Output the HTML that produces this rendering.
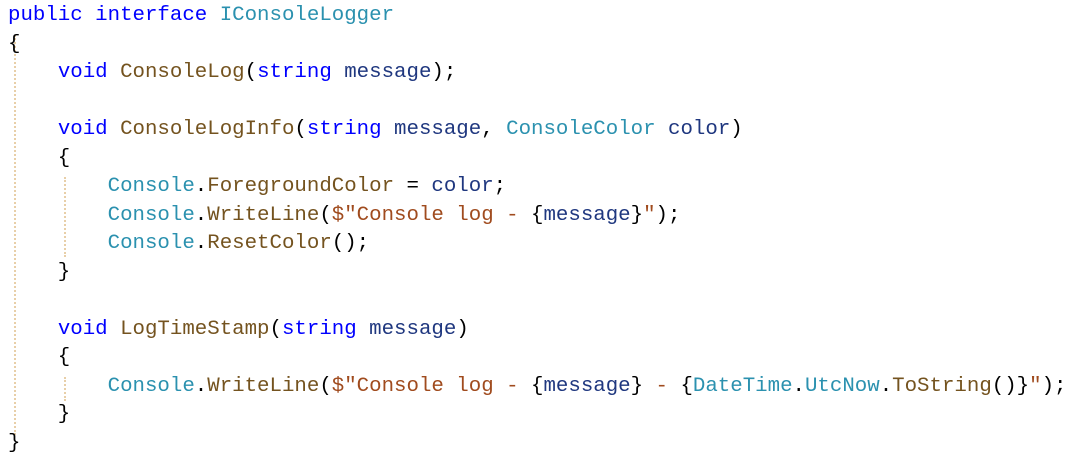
<!DOCTYPE html>
<html><head><style>
html,body{margin:0;background:#fff;width:1074px;height:462px;overflow:hidden}
pre{position:absolute;left:8px;top:2px;margin:0;font-family:"Liberation Mono",monospace;font-size:20.75px;line-height:28.5px;color:#000;letter-spacing:0}
.k{color:#0000ff}.t{color:#2b91af}.m{color:#74531f}.s{color:#a04b1e}.p{color:#1f377f}
.g{position:absolute;width:0;border-left:2px dotted #e8cfa8}
</style></head><body>
<div class="g" style="left:14px;top:35px;height:400px"></div>
<div class="g" style="left:64px;top:177px;height:80px"></div>
<div class="g" style="left:64px;top:377px;height:24px"></div>
<pre><span class="k">public</span> <span class="k">interface</span> <span class="t">IConsoleLogger</span>
{
    <span class="k">void</span> <span class="m">ConsoleLog</span>(<span class="k">string</span> <span class="p">message</span>);

    <span class="k">void</span> <span class="m">ConsoleLogInfo</span>(<span class="k">string</span> <span class="p">message</span>, <span class="t">ConsoleColor</span> <span class="p">color</span>)
    {
        <span class="t">Console</span>.<span class="m">ForegroundColor</span> = <span class="p">color</span>;
        <span class="t">Console</span>.<span class="m">WriteLine</span>(<span class="s">$"Console log - </span>{<span class="p">message</span>}<span class="s">"</span>);
        <span class="t">Console</span>.<span class="m">ResetColor</span>();
    }

    <span class="k">void</span> <span class="m">LogTimeStamp</span>(<span class="k">string</span> <span class="p">message</span>)
    {
        <span class="t">Console</span>.<span class="m">WriteLine</span>(<span class="s">$"Console log - </span>{<span class="p">message</span>}<span class="s"> - </span>{<span class="t">DateTime</span>.<span class="t">UtcNow</span>.<span class="m">ToString</span>()}<span class="s">"</span>);
    }
}</pre>
</body></html>
